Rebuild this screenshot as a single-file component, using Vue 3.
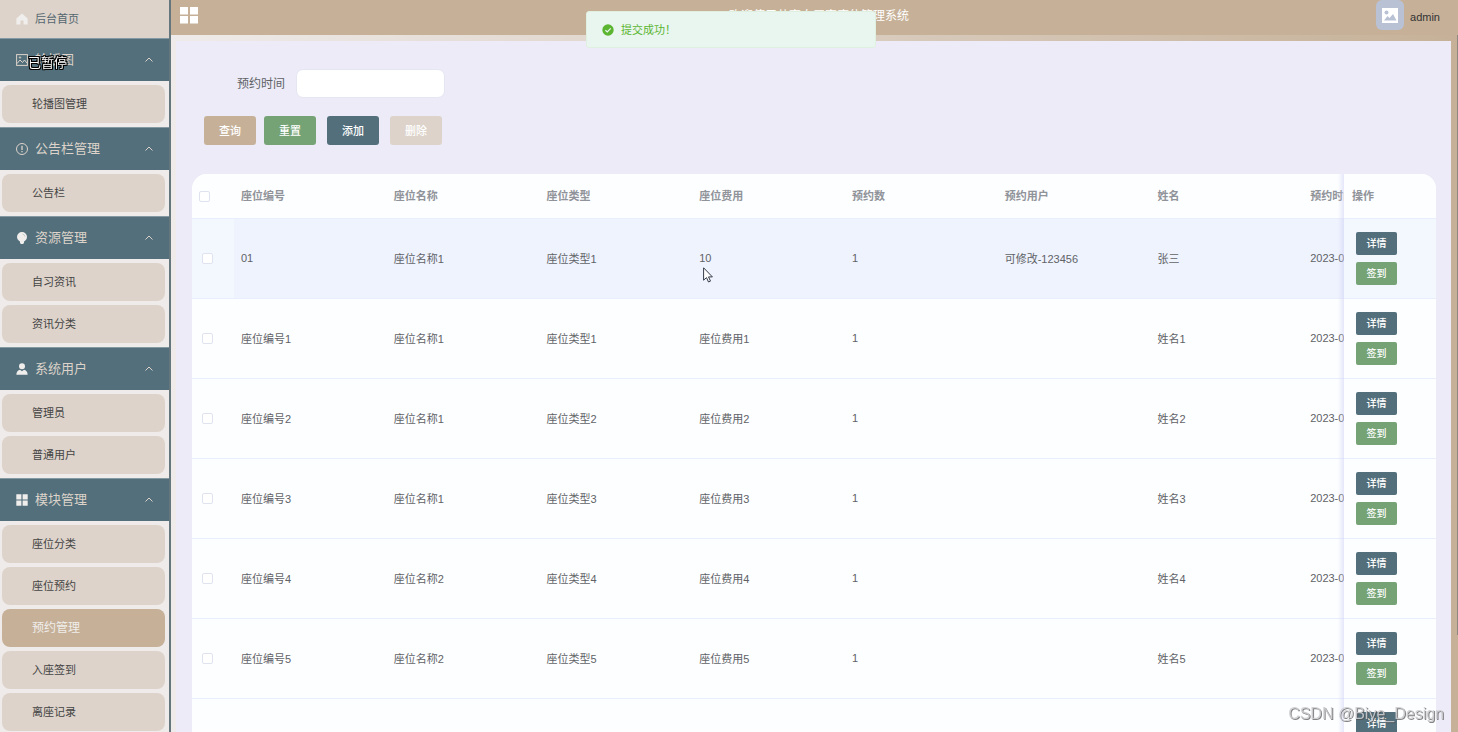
<template>
   <div class="layout">
      <aside class="sidebar">
         <a href="#/home" class="home">
            <svg class="icon" viewBox="0 0 12 12"><path d="M6 .6 11.6 5.4V11.5H7.5V7.6h-3v3.900H.4V5.400z" /></svg>
            <span>后台首页</span>
         </a>
         <nav>
            <section v-for="group in menus" :key="group.title" class="group">
               <button type="button" class="group__title">
                  <svg v-if="group.icon === 'picture'" class="icon line" viewBox="0 0 12 12">
                     <rect x=".6" y=".6" width="10.800" height="10.800" />
                     <path d="M1 9.500 4 6l2.500 2.500L8.500 6 11 9" />
                     <circle cx="4" cy="3.500" r=".7" />
                  </svg>
                  <svg v-else-if="group.icon === 'notice'" class="icon line" viewBox="0 0 12 12">
                     <circle cx="6" cy="6" r="5.500" />
                     <path d="M6 2.800v4.200M6 8v1.200" stroke-width="1.300" />
                  </svg>
                  <svg v-else-if="group.icon === 'bulb'" class="icon" viewBox="0 0 12 12">
                     <path d="M6 0a5 5 0 0 1 5 5c0 2-1.200 3-2.300 4.300H3.300C2.200 8 1 7 1 5a5 5 0 0 1 5-5zM4 9h4v1.900L7 12H5l-1-1.100z" />
                     <path d="M6.500 2Q8.800 2.500 9 4.500" fill="none" stroke="#a9b3b6" stroke-width=".6" />
                  </svg>
                  <svg v-else-if="group.icon === 'user'" class="icon" viewBox="0 0 12 12">
                     <circle cx="6" cy="3.200" r="3" />
                     <path d="M.3 11.800C.5 8.500 2 7.200 4 6.700L6 8.200l2-1.500c2 .5 3.500 1.800 3.700 5.100z" />
                  </svg>
                  <svg v-else class="icon" viewBox="0 0 12 12">
                     <path d="M.3.3h5.100v5.100H.3zM6.600.3h5.100v5.100H6.600zM.3 6.600h5.100v5.100H.3zM6.600 6.600h5.100v5.100H6.600z" />
                  </svg>
                  <span>{{ group.title }}</span>
                  <svg class="arrow" viewBox="0 0 8 5"><path d="M.5 4.500 4 1l3.500 3.500" /></svg>
               </button>
               <ul>
                  <li v-for="item in group.items" :key="item">
                     <a href="#/list" :class="{ active: item === current }" @click.prevent="current = item">{{ item }}</a>
                  </li>
               </ul>
            </section>
         </nav>
      </aside>

      <div class="page">
         <header class="header">
            <button type="button" class="collapse" aria-label="菜单">
               <svg viewBox="0 0 18 17"><path d="M0 0h8v7.500H0zM10 0h8v7.500h-8zM0 9h8v7.500H0zM10 9h8v7.500h-8z" /></svg>
            </button>
            <h1>欢迎使用共享自习室座位管理系统</h1>
            <div class="user">
               <span class="avatar">
                  <svg viewBox="0 0 16 15">
                     <path d="M0 0h16v15H0z" fill="#fff" />
                     <circle cx="4.500" cy="4.500" r="2" fill="#b9c2d5" />
                     <path d="M2 12.500 5.500 8l2 2L11 6l3.500 6.500z" fill="#b9c2d5" />
                  </svg>
               </span>
               <span class="name">admin</span>
            </div>
         </header>

         <div class="frame">
            <main class="content">
               <form class="search" @submit.prevent>
                  <div class="field">
                     <label for="time">预约时间</label>
                     <input id="time" v-model="time" type="text" />
                  </div>
                  <div class="actions">
                     <button type="submit" class="btn tan">查询</button>
                     <button type="button" class="btn green" @click="time = ''">重置</button>
                     <button type="button" class="btn teal">添加</button>
                     <button type="button" class="btn pale">删除</button>
                  </div>
               </form>

               <div class="table-wrap">
                  <table>
                     <thead>
                        <tr>
                           <th class="check"><input type="checkbox" aria-label="全选" /></th>
                           <th v-for="col in columns" :key="col">{{ col }}</th>
                           <th class="ops">操作</th>
                        </tr>
                     </thead>
                     <tbody>
                        <tr v-for="(row, index) in rows" :key="index" :class="{ hover: index === 0 }">
                           <td class="check"><input type="checkbox" :aria-label="row[0]" /></td>
                           <td v-for="(cell, i) in row" :key="i">{{ cell }}</td>
                           <td class="ops">
                              <div class="ops__list">
                                 <button type="button" class="btn small teal">详情</button>
                                 <button type="button" class="btn small green">签到</button>
                              </div>
                           </td>
                        </tr>
                     </tbody>
                  </table>
               </div>
            </main>
         </div>
      </div>

      <div class="message" role="alert">
         <svg viewBox="0 0 12 12">
            <circle cx="6" cy="6" r="5.700" fill="#5bb531" />
            <path d="M3.400 6.200 5.300 8l3.400-3.700" fill="none" stroke="#e9f6f0" stroke-width="1.200" />
         </svg>
         <span>提交成功！</span>
      </div>
      <span class="paused">已暂停</span>
      <span class="watermark">CSDN @Biye_Design</span>
      <span class="scroll-thumb"></span>
      <svg class="cursor" viewBox="0 0 10 16">
         <path d="M.6.800v12.400l2.900-2.600 2 4.400 2-.9-2-4.200h3.900z" fill="#fff" stroke="#333a48" />
      </svg>
   </div>
</template>

<script setup>
import { ref } from 'vue'

const current = ref('预约管理')
const time = ref('')

const menus = [
   { title: '轮播图', icon: 'picture', items: ['轮播图管理'] },
   { title: '公告栏管理', icon: 'notice', items: ['公告栏'] },
   { title: '资源管理', icon: 'bulb', items: ['自习资讯', '资讯分类'] },
   { title: '系统用户', icon: 'user', items: ['管理员', '普通用户'] },
   { title: '模块管理', icon: 'grid', items: ['座位分类', '座位预约', '预约管理', '入座签到', '离座记录'] },
]

const columns = ['座位编号', '座位名称', '座位类型', '座位费用', '预约数', '预约用户', '姓名', '预约时间']

const rows = [
   ['01', '座位名称1', '座位类型1', '10', '1', '可修改-123456', '张三', '2023-03'],
   ['座位编号1', '座位名称1', '座位类型1', '座位费用1', '1', '', '姓名1', '2023-03'],
   ['座位编号2', '座位名称1', '座位类型2', '座位费用2', '1', '', '姓名2', '2023-03'],
   ['座位编号3', '座位名称1', '座位类型3', '座位费用3', '1', '', '姓名3', '2023-03'],
   ['座位编号4', '座位名称2', '座位类型4', '座位费用4', '1', '', '姓名4', '2023-03'],
   ['座位编号5', '座位名称2', '座位类型5', '座位费用5', '1', '', '姓名5', '2023-03'],
   ['', '', '', '', '', '', '', ''],
]
</script>

<style>
body {
   overflow: hidden;
}
</style>

<style scoped>
.layout {
   display: flex;
   height: 100vh;
   overflow: hidden;
   font-family: 'Liberation Sans', 'Noto Sans CJK SC', sans-serif;
   font-size: 11px;
   color: #606266;
}

.layout * {
   box-sizing: border-box;
}

button,
input {
   margin: 0;
   padding: 0;
   border: 0;
   font: inherit;
}

ul {
   margin: 0;
   padding: 0;
   list-style: none;
}

a {
   color: inherit;
   text-decoration: none;
}

/* 侧边栏 */
.sidebar {
   flex: none;
   width: 171px;
   overflow: hidden;
   background: #efebea;
   border-right: 2px solid #66767d;
}

.home,
.group__title {
   display: flex;
   align-items: center;
   gap: 7px;
   width: 100%;
   padding: 0 16px;
}

.home span,
.group__title span {
   padding-bottom: 3px;
}

.home {
   height: 38px;
   background: #ddd3ca;
   color: #54666f;
}

.group__title {
   height: 43px;
   background: #526f7b;
   border-top: 1px solid #8499a1;
   color: #ddd3ca;
   font-size: 13px;
}

.icon {
   flex: none;
   width: 12px;
   height: 12px;
   fill: #f0eeec;
}

.icon.line {
   fill: none;
   stroke: #ddd3ca;
}

.arrow {
   width: 8px;
   height: 5px;
   margin: 0 0 2px auto;
   fill: none;
   stroke: #ddd3ca;
}

.group ul {
   padding-top: 4px;
}

.group li {
   padding: 0 4px 4px 2px;
}

.group li a {
   display: block;
   height: 38px;
   padding-left: 30px;
   line-height: 38px;
   border-radius: 8px;
   background: #ddd3ca;
   color: #444;
}

.group li a.active {
   background: #c6b198;
   color: #f0eeec;
   font-size: 12px;
}

/* 顶部 */
.page {
   flex: 1;
   min-width: 0;
   display: flex;
   flex-direction: column;
}

.header {
   flex: none;
   display: grid;
   grid-template-columns: 1fr auto 1fr;
   align-items: center;
   height: 35px;
   padding: 0 18px 6px 9px;
   background: #c6b198;
}

.header h1 {
   margin: 0;
   padding: 0 0 2px 18px;
   font-size: 12px;
   font-weight: 400;
   color: #fff;
}

.collapse {
   width: 18px;
   height: 17px;
   background: none;
}

.collapse svg {
   display: block;
   fill: #fff;
}

.user {
   display: flex;
   align-items: center;
   justify-content: flex-end;
   gap: 6px;
   color: #333;
}

.name {
   padding-top: 3px;
}

.avatar {
   display: flex;
   align-items: center;
   justify-content: center;
   width: 28px;
   height: 30px;
   border-radius: 6px;
   background: #b9c2d5;
}

.avatar svg {
   width: 16px;
   height: 15px;
}

/* 内容 */
.frame {
   flex: 1;
   min-height: 0;
   padding: 6px 7px 0 5px;
   background: linear-gradient(to right, #efebea, #c6b198);
}

.content {
   height: 100%;
   padding: 28px 15px 0 16px;
   overflow: hidden;
   background: #ecebf7;
}

.field {
   display: flex;
   align-items: center;
   gap: 11px;
   padding-left: 45px;
   font-size: 12px;
}

.field label {
   padding-bottom: 2px;
}

.field input {
   width: 149px;
   height: 29px;
   padding: 0 10px;
   border: 1px solid #e4e6f2;
   border-radius: 7px;
   background: #fff;
}

.actions {
   display: flex;
   gap: 11px;
   padding: 18px 0 29px 12px;
}

.btn {
   width: 52px;
   height: 29px;
   padding-bottom: 2px;
   border-radius: 3px;
   color: #fff;
   font-weight: 500;
}

.btn.green {
   background: #75a375;
}

.btn.teal {
   background: #526f7b;
}

.btn.tan {
   margin-right: -3px;
   background: #c6b198;
}

.btn.pale {
   background: #ddd3ca;
}

.btn.small {
   width: 41px;
   height: 23px;
   border-radius: 2px;
   font-size: 10px;
}

.table-wrap {
   overflow: hidden;
   border-radius: 15px;
   background: #fdfeff;
}

table {
   width: 109%;
   table-layout: fixed;
   border-collapse: separate;
   border-spacing: 0;
}

th,
td {
   height: 80px;
   padding: 0 7px 2px;
   overflow: hidden;
   border-bottom: 1px solid #e8eefb;
   background: #fdfeff;
   text-align: left;
   white-space: nowrap;
}

th {
   height: 45px;
   color: #909399;
   font-weight: 700;
}

.check {
   width: 42px;
   padding-bottom: 0;
}

.check input {
   display: block;
   width: 11px;
   height: 11px;
   appearance: none;
   border: 1px solid #dfe3f0;
   border-radius: 2px;
   background: #fff;
}

td.check {
   padding-left: 10px;
}

.ops {
   position: sticky;
   right: 0;
   width: 92px;
   padding-left: 8px;
   overflow: visible;
}

.ops::before {
   content: '';
   position: absolute;
   top: 0;
   bottom: -1px;
   right: 100%;
   width: 6px;
   background: linear-gradient(to left, rgba(205, 208, 245, 0.5), rgba(205, 208, 245, 0));
}

td.ops {
   padding: 0 0 0 12px;
}

.ops__list {
   display: flex;
   flex-direction: column;
   gap: 7px;
}

.hover td {
   background: #eff3fe;
}

.hover td.check,
.hover td.ops {
   background: #f3f8ff;
}

/* 浮层 */
.message {
   position: fixed;
   top: 11px;
   left: 50%;
   display: flex;
   align-items: center;
   gap: 7px;
   width: 290px;
   height: 37px;
   margin-left: 2px;
   padding: 0 15px;
   transform: translateX(-50%);
   border: 1px solid #dff0e0;
   border-radius: 3px;
   background: #e9f6f0;
   color: #5bb531;
}

.message svg {
   width: 12px;
   height: 12px;
}

.message span {
   padding-bottom: 2px;
}

.paused {
   position: fixed;
   top: 53px;
   left: 28px;
   color: #fff;
   font-size: 13px;
   line-height: 20px;
   text-shadow: 1px 0 #000, -1px 0 #000, 0 1px #000, 0 -1px #000, 1px 1px #000, -1px -1px #000, 1px -1px #000, -1px 1px #000;
}

.watermark {
   position: fixed;
   right: 14px;
   bottom: 8px;
   color: rgba(205, 205, 210, 0.9);
   font-size: 16px;
   line-height: 20px;
   text-shadow: 1px 1px 0 rgba(80, 80, 80, 0.7);
}

.scroll-thumb {
   position: fixed;
   top: 35px;
   right: 0;
   width: 1px;
   height: 82%;
   background: #8f8880;
}

.cursor {
   position: fixed;
   top: 267px;
   left: 703px;
   width: 10px;
   height: 16px;
}
</style>
